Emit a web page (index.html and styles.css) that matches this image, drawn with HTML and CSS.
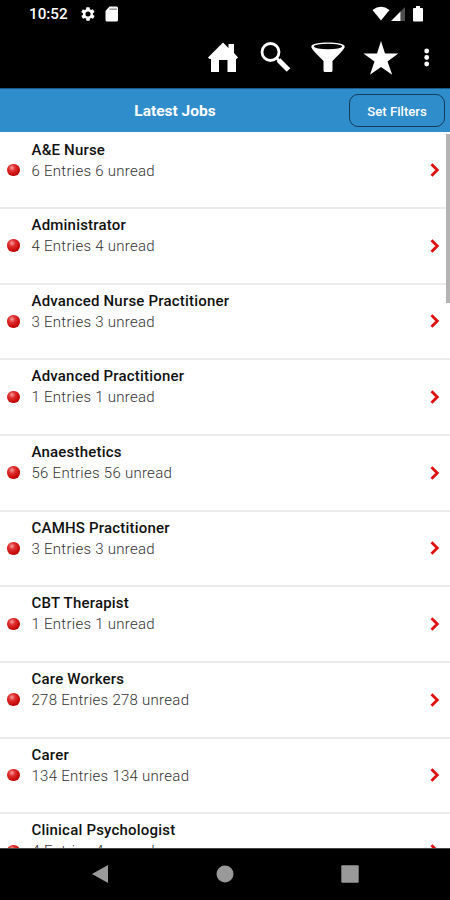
FILE: index.html
```html
<!DOCTYPE html>
<html lang="en">
<head>
  <meta charset="UTF-8">
  <meta name="viewport" content="width=device-width, initial-scale=1.0">
  <title>Latest Jobs</title>
  <link rel="stylesheet" href="styles.css">
</head>
<body>
  <div class="app">
    <div class="status-bar">
      <span class="time">10:52</span>
      <svg class="gear" width="16" height="16" viewBox="0 0 24 24"><path fill="#fff" fill-rule="evenodd" d="M19.4 13a7.500 7.500 0 0 0 0-2l2.100-1.700a.5.5 0 0 0 .1-.6l-2-3.500a.5.5 0 0 0-.6-.2l-2.500 1a7.300 7.300 0 0 0-1.700-1l-.4-2.600a.5.5 0 0 0-.5-.4h-4a.5.5 0 0 0-.5.4L9 5.100a7.700 7.700 0 0 0-1.700 1l-2.500-1a.5.5 0 0 0-.6.200l-2 3.500a.5.5 0 0 0 .1.600L4.500 11a8 8 0 0 0 0 2l-2.100 1.700a.5.5 0 0 0-.1.600l2 3.500c.1.200.4.300.6.200l2.500-1a7.300 7.300 0 0 0 1.700 1l.4 2.600c0 .2.200.4.500.4h4c.2 0 .5-.2.500-.4l.4-2.600a7.700 7.700 0 0 0 1.700-1l2.500 1c.2.100.5 0 .6-.2l2-3.500a.5.5 0 0 0-.1-.6zM12 15.800a3.800 3.800 0 1 1 0-7.600 3.800 3.800 0 0 1 0 7.600z"/></svg>
      <svg class="card" width="14" height="16" viewBox="0 0 14 16"><path fill="#fff" d="M4.500.5H11.500Q13 .5 13 2V14Q13 15.500 11.500 15.500H2Q.5 15.500.5 14V5z"/><path stroke="#999" stroke-width="1.500" d="M4.500 3.200H12"/></svg>
      <div class="signals">
        <svg width="18" height="16" viewBox="0 0 18 16"><path fill="#fff" d="M.5 4Q9-2.500 17.500 4L9 14.500z"/></svg>
        <svg width="14" height="16" viewBox="0 0 14 16"><path fill="#4d4d4d" d="M9.500 5.500 14 1V15H9.500z"/><path fill="#fff" d="M0 15 9.500 5.500V15z"/></svg>
        <svg class="battery" width="10" height="16" viewBox="0 0 10 16"><path fill="#fff" d="M3 0H7V2H9Q10 2 10 3V14.500Q10 15.500 9 15.500H1Q0 15.500 0 14.500V3Q0 2 1 2H3z"/></svg>
      </div>
    </div>

    <div class="toolbar">
      <svg width="36" height="36" viewBox="0 0 36 36"><path fill="#fff" d="M18 2.500 23.500 8V4H29V13L33 17.500 31.500 19H31V32H22.500V20H14V32H6V19H4.500L3 17.500z"/></svg>
      <svg width="36" height="36" viewBox="0 0 36 36"><circle cx="12.500" cy="12" r="8.500" fill="none" stroke="#fff" stroke-width="2.800"/><path stroke="#fff" stroke-width="2.500" d="M18 17.500 21 20.500"/><path stroke="#fff" stroke-width="5" d="M20.500 20 30.500 30"/></svg>
      <svg width="36" height="36" viewBox="0 0 36 36"><path fill="#fff" d="M1.300 6.500C1.300 1.300 34.700 1.300 34.700 6.500C34.700 9.500 29 14 22.500 21V30.500Q22.500 32 21 32H15Q13.500 32 13.500 30.500V21C7 14 1.300 9.500 1.300 6.500z"/><ellipse cx="18" cy="6.500" rx="14" ry="2.700"/></svg>
      <svg width="36" height="36" viewBox="0 0 36 36"><path fill="#fff" d="M18 1 22 13.500H35.300L24.500 21.500 29.200 34.700 18 27 7 34.700 11.500 21.500.4 13.500H14z"/></svg>
      <svg class="more" width="8" height="20" viewBox="0 0 8 20"><g fill="#fff"><circle cx="3.700" cy="3" r="2.400"/><circle cx="3.700" cy="9.500" r="2.400"/><circle cx="3.700" cy="16" r="2.400"/></g></svg>
    </div>

    <div class="title-bar">
      <h1 class="title">Latest Jobs</h1>
      <button class="filters">Set Filters</button>
    </div>

    <div class="job-list" id="jobList">
      <div class="scroll-thumb"></div>
    </div>

    <div class="nav-bar">
      <svg width="18" height="18" viewBox="0 0 18 18"><path fill="#999" d="M17 0V18L1 9z"/></svg>
      <svg width="18" height="18" viewBox="0 0 18 18"><circle cx="9" cy="9" r="8.500" fill="#999"/></svg>
      <svg width="18" height="18" viewBox="0 0 18 18"><rect x=".3" y=".3" width="17.400" height="17.400" rx="1" fill="#999"/></svg>
    </div>
  </div>

  <script>
  const jobs = [
    ['A&E Nurse', 6],
    ['Administrator', 4],
    ['Advanced Nurse Practitioner', 3],
    ['Advanced Practitioner', 1],
    ['Anaesthetics', 56],
    ['CAMHS Practitioner', 3],
    ['CBT Therapist', 1],
    ['Care Workers', 278],
    ['Carer', 134],
    ['Clinical Psychologist', 4],
  ];

  const jobList = document.getElementById('jobList');

  jobs.forEach(([name, count]) => {
    const row = document.createElement('div');
    row.className = 'job';
    row.innerHTML = `
      <span class="dot"></span>
      <div class="job-text">
        <div class="job-name"></div>
        <div class="job-count">${count} Entries ${count} unread</div>
      </div>
      <svg class="chevron" width="10" height="14" viewBox="0 0 10 14"><path fill="none" stroke="#e01010" stroke-width="2.800" d="M1.500 1.200 7.300 7 1.500 12.800"/></svg>`;
    row.querySelector('.job-name').textContent = name;
    jobList.appendChild(row);
  });
  </script>
</body>
</html>
```

FILE: styles.css
```css
* {
  box-sizing: border-box;
}

body {
  margin: 0;
  font-family: Roboto, 'Liberation Sans', sans-serif;
  background-color: #000;
}

svg {
  display: block;
  flex-shrink: 0;
}

.app {
  display: flex;
  flex-direction: column;
  height: 900px;
  overflow: hidden;
}

/* Android status bar */
.status-bar {
  display: flex;
  align-items: center;
  height: 28px;
  padding: 0 27px 0 29px;
  color: #fff;
}

.time {
  width: 51px;
  font-size: 15.2px;
  font-weight: 500;
}

.card {
  margin-left: 9px;
}

.signals {
  display: flex;
  margin-left: auto;
}

.signals svg + svg {
  margin-left: 1px;
}

.signals .battery {
  margin-left: 8px;
}

.toolbar {
  display: flex;
  justify-content: flex-end;
  align-items: center;
  gap: 16.5px;
  height: 60px;
  padding-right: 19.5px;
}

.toolbar .more {
  margin-left: 7.5px;
}

.title-bar {
  display: grid;
  grid-template-columns: 1fr auto;
  align-items: center;
  height: 44px;
  padding-right: 5px;
  background-color: #2e8dca;
  border-top: 1px solid #1c5a85;
  color: #fff;
}

.title {
  margin: 0;
  padding-left: 1px;
  text-align: center;
  font-size: 15.5px;
  font-weight: 700;
}

.filters {
  width: 96px;
  height: 33px;
  padding: 1px 0 0;
  background: none;
  border: 1px solid #123c5c;
  border-radius: 9px;
  color: #fff;
  font-family: inherit;
  font-size: 13.2px;
  font-weight: 500;
}

.job-list {
  position: relative;
  flex: 1;
  min-height: 0;
  padding-top: 1.5px;
  overflow: hidden;
  background-color: #fff;
}

.scroll-thumb {
  position: absolute;
  top: 2px;
  right: 0;
  width: 4px;
  height: 169px;
  background-color: #b3b3b3;
}

.job {
  display: flex;
  height: 75.65px;
  padding: 6px 10.5px 0 7px;
  border-bottom: 2px solid #ebebeb;
}

.dot {
  width: 12.5px;
  height: 12.5px;
  margin-top: 24.3px;
  border-radius: 50%;
  background: radial-gradient(circle at 38% 32%, #f5a0a0 0%, #e03030 28%, #c80a0a 62%, #980000 100%);
}

.job-text {
  flex: 1;
  margin-left: 12px;
  line-height: 21px;
}

.job-name {
  color: #111;
  font-size: 15px;
  font-weight: 500;
  letter-spacing: 0.2px;
}

.job-count {
  color: #333;
  font-size: 15px;
  font-weight: 300;
  letter-spacing: 0.27px;
}

.chevron {
  margin-top: 23.6px;
}

.nav-bar {
  display: flex;
  justify-content: space-between;
  height: 52px;
  padding: 16px 91px 0;
  border-top: 1px solid #444;
  background-color: #000;
}
```
